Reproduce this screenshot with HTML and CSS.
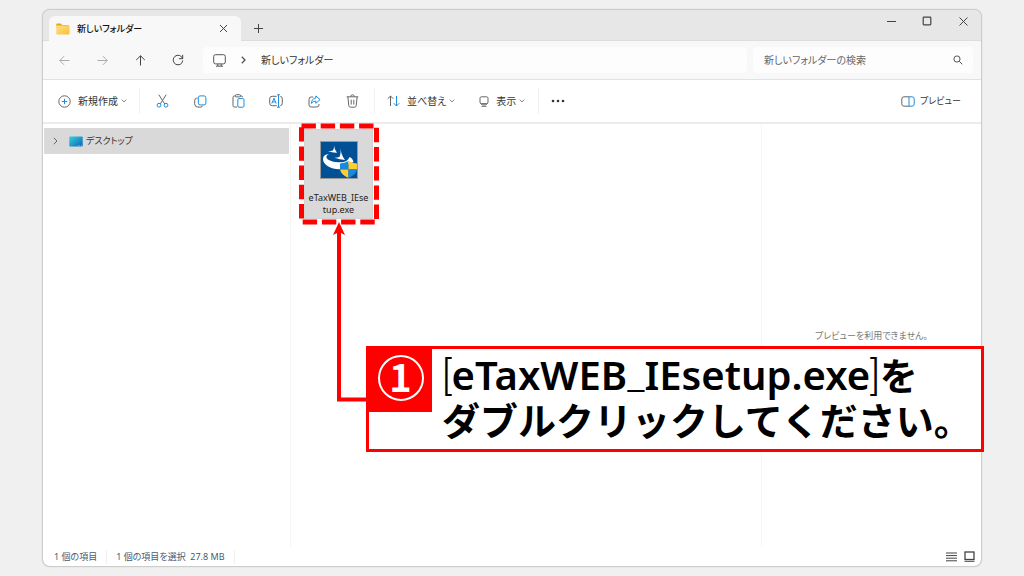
FILE: index.html
```html
<!DOCTYPE html>
<html lang="ja">
<head>
<meta charset="utf-8">
<title>新しいフォルダー</title>
<link rel="stylesheet" href="styles.css">
</head>
<body>
<main class="window">
  <header class="titlebar">
    <div class="tab">
      <svg class="tab-icon" width="14" height="12" viewBox="0 0 14 12"><defs><linearGradient id="fold" x1="0" y1="0" x2="1" y2="1"><stop offset="0" stop-color="#ffe08a"/><stop offset="1" stop-color="#fbbf2f"/></linearGradient></defs><path d="M1.2.5h3.600l1.400 1.400h6.400v3H.3V1.400Q.3.5 1.200.5z" fill="#f0a30a"/><rect x=".3" y="2.600" width="13.200" height="9" rx="1" fill="url(#fold)"/></svg>
      <span class="tab-title">新しいフォルダー</span>
      <button class="icon-button tab-close" aria-label="タブを閉じる"><svg width="9" height="9" viewBox="0 0 9 9"><path d="M1 1l7 7M8 1l-7 7"/></svg></button>
    </div>
    <button class="icon-button new-tab" aria-label="新しいタブ"><svg width="9" height="9" viewBox="0 0 9 9"><path d="M4.500 0v9M0 4.500h9"/></svg></button>
    <div class="window-controls">
      <button class="icon-button" aria-label="最小化"><svg width="9" height="9" viewBox="0 0 9 9"><path d="M0 4.500h9"/></svg></button>
      <button class="icon-button" aria-label="最大化"><svg width="10" height="10" viewBox="0 0 10 10"><rect x="1.200" y="1.200" width="7.600" height="7.600" rx=".8" stroke-width="1.200"/></svg></button>
      <button class="icon-button" aria-label="閉じる"><svg width="9" height="9" viewBox="0 0 9 9"><path d="M.5.5l8 8M8.500.5l-8 8"/></svg></button>
    </div>
  </header>

  <nav class="navbar">
    <div class="history">
      <button class="icon-button faded" aria-label="戻る"><svg width="11" height="11" viewBox="0 0 11 11"><path d="M10.500 5.500H.8M5 1.200L.8 5.500 5 9.800"/></svg></button>
      <button class="icon-button faded" aria-label="進む"><svg width="11" height="11" viewBox="0 0 11 11"><path d="M.5 5.500h9.700M6 1.200l4.200 4.300L6 9.800"/></svg></button>
      <button class="icon-button" aria-label="上へ"><svg width="11" height="11" viewBox="0 0 11 11"><path d="M5.500 10.500V.8M1.200 5L5.500.8 9.800 5"/></svg></button>
      <button class="icon-button" aria-label="更新"><svg width="12" height="12" viewBox="0 0 12 12"><path d="M10.600 4.600A4.800 4.800 0 1 0 10.800 6.500M10.700.8v3.900H6.900"/></svg></button>
    </div>
    <div class="address">
      <svg width="13" height="13" viewBox="0 0 13 13"><rect x=".7" y=".7" width="11.600" height="9.200" rx="1.800"/><path d="M4.800 10v2M8.200 10v2M3 12.200h7"/></svg>
      <svg width="5" height="8" viewBox="0 0 5 8"><path d="M.8.8L4 4 .8 7.200" stroke-width="1.300"/></svg>
      <span>新しいフォルダー</span>
    </div>
    <label class="search">
      <input type="search" placeholder="新しいフォルダーの検索" aria-label="新しいフォルダーの検索">
      <svg width="10" height="10" viewBox="0 0 10 10"><circle cx="4" cy="4" r="3.100"/><path d="M6.300 6.300L9.300 9.300"/></svg>
    </label>
  </nav>

  <div class="toolbar">
    <button class="tool-label new-item"><svg width="13" height="13" viewBox="0 0 13 13"><circle cx="6.500" cy="6.500" r="5.700"/><path class="accent" d="M6.500 3.800v5.400M3.800 6.500h5.400"/></svg><span>新規作成</span><svg class="caret" width="6" height="4" viewBox="0 0 6 4"><path d="M.7.6L3 3 5.300.6"/></svg></button>
    <div class="tool-icons">
      <button class="icon-button" aria-label="切り取り"><svg width="13" height="14" viewBox="0 0 13 14"><path d="M2.800.7L8.700 9.900M10.200.7L4.300 9.900"/><circle class="accent" cx="3" cy="11.200" r="1.900"/><circle class="accent" cx="10" cy="11.200" r="1.900"/></svg></button>
      <button class="icon-button" aria-label="コピー"><svg width="13" height="13" viewBox="0 0 13 13"><path d="M3.600 3.200H2.400Q.7 3.500.7 5.500v3.400q0 3.200 3.200 3.200h2.800q1.500 0 2-1.500"/><rect class="accent" x="4.300" y=".9" width="7.600" height="9" rx="1.800"/></svg></button>
      <button class="icon-button" aria-label="貼り付け"><svg width="13" height="14" viewBox="0 0 13 14"><path d="M4 2H2.300Q1 2 1 3.300v8.400Q1 13 2.300 13H5M8 2h1.300q1.300 0 1.400 1.300"/><rect x="3.500" y=".7" width="5" height="2.200" rx="1"/><rect class="accent" x="5.800" y="4.600" width="6.200" height="8.600" rx="1.200"/></svg></button>
      <button class="icon-button" aria-label="名前の変更"><svg width="14" height="14" viewBox="0 0 14 14"><path d="M7.700 2.300H3.200Q.7 2.300.7 4.700v4.600q0 2.400 2.500 2.400h4.500M11.300 2.300q2 .2 2 2.400v4.600q0 2.200-2 2.400"/><path class="accent" d="M2.800 9.500L5 4.200l2.200 5.300M3.600 7.900h2.800M9.500.8v12.400M8 .8h3M8 13.200h3"/></svg></button>
      <button class="icon-button" aria-label="共有"><svg width="13" height="13" viewBox="0 0 13 13"><path d="M5.300 2H3.200Q1 2 1 4.200v5.600Q1 12 3.200 12h5.600q2.200 0 2.200-2.200V9"/><path class="accent" d="M7.800.9l4.300 3.700-4.300 3.700V6.100Q4.900 6 3.400 8.400 3.700 3.500 7.800 3z"/></svg></button>
      <button class="icon-button" aria-label="削除"><svg width="13" height="14" viewBox="0 0 13 14"><path d="M.7 2.800h11.600M4.700 2.600Q4.800.8 6.500.8t1.800 1.800M1.900 3l.9 8.700q.2 1.500 1.600 1.500h4.200q1.400 0 1.600-1.500l.9-8.700M5.200 5.700v4.800M7.800 5.700v4.800"/></svg></button>
    </div>
    <div class="tool-menus">
      <button class="tool-label"><svg width="13" height="12" viewBox="0 0 13 12"><path d="M3.500 11V1M.7 3.800L3.500 1l2.800 2.800"/><path class="accent" d="M9.500 1v10M6.700 8.200L9.500 11l2.800-2.800"/></svg><span>並べ替え</span><svg class="caret" width="6" height="4" viewBox="0 0 6 4"><path d="M.7.6L3 3 5.300.6"/></svg></button>
      <button class="tool-label"><svg width="10" height="11" viewBox="0 0 10 11"><rect x="1" y=".8" width="8" height="6.800" rx="1.400"/><path d="M1.300 7.300l1.800 1.500h3.800l1.800-1.500M2.600 10.300h4.800"/></svg><span>表示</span><svg class="caret" width="6" height="4" viewBox="0 0 6 4"><path d="M.7.6L3 3 5.300.6"/></svg></button>
    </div>
    <button class="icon-button more" aria-label="もっと見る"><svg width="14" height="4" viewBox="0 0 14 4"><g class="dots"><circle cx="2" cy="2" r="1.300"/><circle cx="7" cy="2" r="1.300"/><circle cx="12" cy="2" r="1.300"/></g></svg></button>
    <button class="tool-label preview-toggle"><svg width="14" height="11" viewBox="0 0 14 11"><path d="M8 .8H3Q.8.8.8 3v5Q.8 10.200 3 10.200h5"/><path class="accent" d="M8 .8h3q2.200 0 2.200 2.200v5q0 2.200-2.200 2.200H8z"/></svg><span>プレビュー</span></button>
  </div>

  <div class="panes">
    <aside class="tree">
      <a class="tree-item" href="#desktop">
        <svg width="5" height="8" viewBox="0 0 5 8"><path d="M.8.8L4 4 .8 7.200"/></svg>
        <svg width="14" height="11" viewBox="0 0 14 11"><defs><linearGradient id="desk" x1="0" y1="0" x2="1" y2="1"><stop offset="0" stop-color="#38d0e2"/><stop offset="1" stop-color="#0b63b5"/></linearGradient></defs><rect x=".3" y=".4" width="13.400" height="10.200" rx=".8" fill="url(#desk)" stroke="none"/><path d="M8.500 9.700h.9M10.300 9.700h.9M12 9.700h.9" stroke="#bfe6fa" stroke-width=".7"/></svg>
        <span>デスクトップ</span>
      </a>
    </aside>
    <section class="files">
      <div class="file-slot">
        <a class="file" href="#file">
          <svg width="38" height="38" viewBox="0 0 38 38">
            <rect x=".5" y=".5" width="37" height="37" fill="#005096" stroke="#9a9a9a"/>
            <path d="M14 4.500q.3 4 3 7.200-4.500.3-9-1.700 3 0 5-.6Q14.300 8 14 4.500z" fill="#fff"/>
            <path d="M20.500 7q.3 6.500 4.500 12-5-.2-10.500-2.200 3.500 0 5.300-1.300Q21 12.500 20.500 7z" fill="#fff"/>
            <path d="M9 13Q3 13.500 3 18c0 6 8 10.500 17 10.300l1-7.300C13 22 5.500 18.500 6.500 15.200Q7 13.800 9 13z" fill="#fff"/>
            <path d="M20 21.500q8-.5 9.500-5.500 3 1 4 5l-5 2-8 4z" fill="#fff"/>
            <path d="M28.500 20q-4 2-8.500 2.500V28.500h8.500z" fill="#168bdc"/>
            <path d="M28.500 20q4 2 8.500 2.500V28.500h-8.500z" fill="#ffcc32"/>
            <path d="M20 28.500h8.500V37q-7.500-3-8.500-8.500z" fill="#ffcc32"/>
            <path d="M28.500 28.500H37q-1 5.500-8.500 8.500z" fill="#168bdc"/>
          </svg>
          <span class="file-name">eTaxWEB_IEse<br>tup.exe</span>
        </a>
        <svg class="highlight" width="80" height="102" viewBox="0 0 80 102" aria-hidden="true"><rect x="2.500" y="3" width="75" height="96"/></svg>
        <svg class="arrow" width="36" height="182" viewBox="0 0 36 182" aria-hidden="true"><path class="arrow-line" d="M8 8v169.500h28"/><path class="arrow-head" d="M8 0l6 13-6-3-6 3z"/></svg>
        <div class="callout">
          <div class="step"><span class="step-number">1</span></div>
          <p class="callout-text"><span class="latin"><span class="thin">[</span>eTaxWEB<span class="thin">_</span>IEsetup.exe<span class="thin">]</span></span>を<br>ダブルクリックしてください。</p>
        </div>
      </div>
    </section>
    <aside class="preview">プレビューを利用できません。</aside>
  </div>

  <footer class="status">
    <span class="status-cell">1 個の項目</span>
    <span class="status-cell">1 個の項目を選択&nbsp; 27.8 MB</span>
    <div class="view-modes">
      <button class="icon-button" aria-label="詳細"><svg width="11" height="10" viewBox="0 0 11 10"><path d="M0 1h11M0 3.600h11M0 6.200h11M0 8.800h11"/></svg></button>
      <button class="icon-button" aria-label="大アイコン"><svg width="11" height="11" viewBox="0 0 11 11"><rect x="1" y="1" width="9" height="7.500" stroke-width="1.300"/><path d="M.5 10.300h10"/></svg></button>
    </div>
  </footer>
</main>
</body>
</html>
```
FILE: styles.css
```css
* { box-sizing: border-box; }

body {
  margin: 0;
  min-height: 100vh;
  display: flex;
  padding: 9px 42px;
  background: #f0f0f0;
  color: #333;
  font: 10px/14px "Noto Sans", "Noto Sans CJK JP", sans-serif;
  font-feature-settings: "palt";
}

button {
  border: 0;
  padding: 0;
  background: none;
  color: inherit;
  font: inherit;
  font-feature-settings: inherit;
}

a { color: inherit; text-decoration: none; }

svg {
  display: block;
  flex: none;
  fill: none;
  stroke: #666;
  stroke-width: 1;
}

.accent { stroke: #1e8de0; }
.dots { fill: #333; stroke: none; }

.icon-button {
  display: flex;
  align-items: center;
  justify-content: center;
}

.window {
  flex: 1;
  min-width: 0;
  display: flex;
  flex-direction: column;
  border: 1px solid #ccc;
  border-radius: 8px;
  background: #fff;
  box-shadow: 0 0 1px #bbb;
}

.titlebar {
  display: flex;
  align-items: flex-end;
  height: 31px;
  padding-left: 6px;
  border-bottom: 1px solid #ddd;
  border-radius: 7px 7px 0 0;
  background: #e7e7e7;
}

.tab {
  display: flex;
  align-items: center;
  width: 192px;
  height: 25px;
  margin-bottom: -1px;
  padding: 0 13px 0 7px;
  border-radius: 6px 6px 0 0;
  background: #f8f8f8;
}

.tab-icon { stroke: none; }
.tab-title { flex: 1; margin-left: 7px; font-size: 9px; font-weight: 500; color: #111; }
.tab-close svg, .new-tab svg, .window-controls svg { stroke: #444; }
.new-tab { width: 35px; height: 24px; }

.window-controls {
  display: flex;
  align-self: flex-start;
  margin-left: auto;
}

.window-controls .icon-button { width: 36px; height: 22px; }

.navbar {
  display: flex;
  align-items: center;
  height: 39px;
  padding-right: 8px;
  border-bottom: 1px solid #e2e2e2;
  background: #f8f8f8;
}

.history { display: flex; padding: 0 6px 0 2px; }
.history .icon-button { width: 38px; height: 26px; }
.history svg { stroke: #444; }
.history .faded svg { stroke: #aaa; }

.address {
  flex: 1;
  display: flex;
  align-items: center;
  gap: 15px;
  height: 26px;
  padding-left: 10px;
  border-radius: 4px;
  background: #fdfdfd;
}

.search {
  display: flex;
  align-items: center;
  width: 220px;
  height: 26px;
  margin-left: 6px;
  padding: 0 10px 0 11px;
  border-radius: 4px;
  background: #fdfdfd;
}

.search input {
  flex: 1;
  min-width: 0;
  padding: 0;
  border: 0;
  background: none;
  font: inherit;
  font-feature-settings: inherit;
}

.search input::placeholder { color: #666; opacity: 1; }
.address svg, .search svg { stroke: #555; }

.toolbar {
  display: flex;
  align-items: center;
  height: 44px;
  padding: 0 20px 0 15px;
  border-bottom: 2px solid #ececec;
}

.tool-label { display: flex; align-items: center; gap: 7px; }
.tool-label .caret { margin-left: -4px; stroke: #888; }
.new-item { width: 81px; }

.tool-icons {
  display: flex;
  border: solid #f0f0f0;
  border-width: 0 1px;
  padding: 5px 3px;
}

.tool-icons .icon-button { width: 38px; height: 16px; }
.tool-menus { display: flex; gap: 24px; padding: 6px 13px 6px 12px; border-right: 1px solid #f0f0f0; }
.more { margin-left: 12px; height: 26px; }
.preview-toggle { margin-left: auto; font-size: 9px; gap: 5px; }

.panes { flex: 1; display: flex; }

.tree { width: 248px; padding: 4px 1px; border-right: 1px solid #f5f5f5; font-size: 9px; }

.tree-item {
  display: flex;
  align-items: center;
  height: 26px;
  padding-left: 9px;
  border-radius: 1px;
  background: #d9d9d9;
}

.tree-item span { margin-left: 3px; }
.tree-item svg + svg { margin-left: 11px; }

.files { flex: 1; min-width: 0; padding: 5px 13px; }
.file-slot { position: relative; width: 69px; }

.file {
  display: flex;
  flex-direction: column;
  align-items: center;
  height: 90px;
  padding-top: 12px;
  background: #d9d9d9;
  box-shadow: inset 0 0 0 1px #d2d2d2;
}

.file svg { stroke: none; }

.file-name {
  margin-top: 13px;
  font-size: 9px;
  line-height: 12px;
  text-align: center;
  color: #222;
}

.highlight { position: absolute; left: -5px; top: -6px; }
.highlight rect { stroke: #f00; stroke-width: 5; stroke-dasharray: 14.400 4.800; }

.arrow { position: absolute; left: 27px; top: 93px; }
.arrow-line { stroke: #f00; stroke-width: 4; }
.arrow-head { fill: #f00; stroke: none; }

.callout {
  position: absolute;
  left: 62px;
  top: 217px;
  display: flex;
  align-items: flex-start;
  width: 618px;
  height: 106px;
  border: 3px solid #f00;
  background: #fff;
}

.step {
  display: flex;
  justify-content: center;
  width: 63px;
  height: 63px;
  padding-top: 6px;
  background: #f00;
}

.step-number {
  width: 46px;
  height: 46px;
  border: 2px solid #fff;
  border-radius: 50%;
  color: #fff;
  font: bold 38px/38px "Noto Sans CJK JP", sans-serif;
  text-align: center;
}

.callout-text {
  margin: 3px 0 0 10px;
  color: #000;
  font-family: Roboto, "Noto Sans CJK JP", sans-serif;
  font-size: 38px;
  font-weight: 600;
  line-height: 45px;
  font-feature-settings: normal;
  white-space: nowrap;
}

.latin { font: 600 40px/45px "Noto Sans", sans-serif; }
.thin { font-family: Roboto, sans-serif; font-weight: 300; }

.preview {
  display: flex;
  align-items: center;
  justify-content: center;
  width: 220px;
  border-left: 1px solid #f7f7f7;
  color: #777;
  font-size: 9px;
}

.status {
  display: flex;
  align-items: center;
  height: 19px;
  padding: 0 6px 0 2px;
  color: #4a5a74;
  font-size: 9px;
}

.status-cell { padding: 0 9px; border-right: 1px solid #f0f0f0; }
.view-modes { display: flex; gap: 7px; margin-left: auto; }
.view-modes svg { stroke: #444; }
```
